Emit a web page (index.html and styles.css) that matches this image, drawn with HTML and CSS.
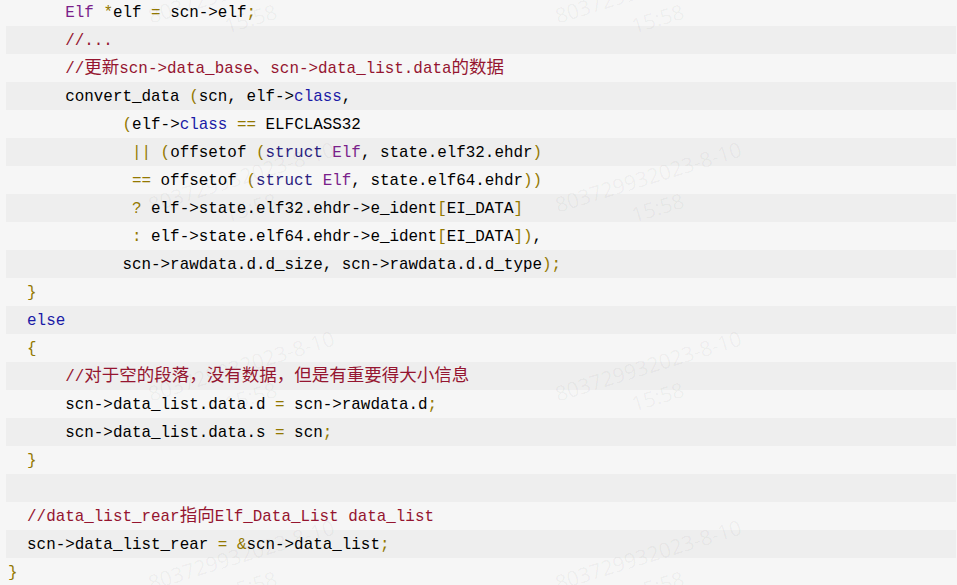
FILE: index.html
```html
<!DOCTYPE html>
<html lang="zh">
<head>
<meta charset="utf-8">
<title>code</title>
<link rel="stylesheet" href="styles.css">
</head>
<body>
<div class="page">
<pre class="code"><div class="l">      <span class="ty">Elf</span> <span class="o">*</span>elf <span class="o">=</span> scn-&gt;elf<span class="o">;</span></div><div class="l">      <span class="c">//...</span></div><div class="l">      <span class="c">//<span class="cjk">更新</span>scn-&gt;data_base<span class="cjk">、</span>scn-&gt;data_list.data<span class="cjk">的数据</span></span></div><div class="l">      convert_data <span class="o">(</span>scn, elf-&gt;<span class="k">class</span>,</div><div class="l">            <span class="o">(</span>elf-&gt;<span class="k">class</span> <span class="o">==</span> ELFCLASS32</div><div class="l">             <span class="o">||</span> <span class="o">(</span>offsetof <span class="o">(</span><span class="s">struct</span> <span class="ty">Elf</span>, state.elf32.ehdr<span class="o">)</span></div><div class="l">             <span class="o">==</span> offsetof <span class="o">(</span><span class="s">struct</span> <span class="ty">Elf</span>, state.elf64.ehdr<span class="o">))</span></div><div class="l">             <span class="o">?</span> elf-&gt;state.elf32.ehdr-&gt;e_ident<span class="o">[</span>EI_DATA<span class="o">]</span></div><div class="l">             <span class="o">:</span> elf-&gt;state.elf64.ehdr-&gt;e_ident<span class="o">[</span>EI_DATA<span class="o">])</span>,</div><div class="l">            scn-&gt;rawdata.d.d_size, scn-&gt;rawdata.d.d_type<span class="o">);</span></div><div class="l">  <span class="o">}</span></div><div class="l">  <span class="k">else</span></div><div class="l">  <span class="o">{</span></div><div class="l">      <span class="c">//<span class="cjk">对于空的段落，没有数据，但是有重要得大小信息</span></span></div><div class="l">      scn-&gt;data_list.data.d <span class="o">=</span> scn-&gt;rawdata.d<span class="o">;</span></div><div class="l">      scn-&gt;data_list.data.s <span class="o">=</span> scn<span class="o">;</span></div><div class="l">  <span class="o">}</span></div><div class="l"> </div><div class="l">  <span class="c">//data_list_rear<span class="cjk">指向</span>Elf_Data_List data_list</span></div><div class="l">  scn-&gt;data_list_rear <span class="o">=</span> <span class="o">&amp;</span>scn-&gt;data_list<span class="o">;</span></div><div class="l"><span class="o">}</span></div></pre>
<div class="wm-layer" aria-hidden="true">
  <div class="wm"><div class="wm-t">803729932023-8-10<br>15:58</div></div>
  <div class="wm"><div class="wm-t">803729932023-8-10<br>15:58</div></div>
  <div class="wm"><div class="wm-t">803729932023-8-10<br>15:58</div></div>
  <div class="wm"><div class="wm-t">803729932023-8-10<br>15:58</div></div>
  <div class="wm"><div class="wm-t">803729932023-8-10<br>15:58</div></div>
  <div class="wm"><div class="wm-t">803729932023-8-10<br>15:58</div></div>
  <div class="wm"><div class="wm-t">803729932023-8-10<br>15:58</div></div>
  <div class="wm"><div class="wm-t">803729932023-8-10<br>15:58</div></div>
</div>
</div>
</body>
</html>
```
FILE: styles.css
```css
html, body {
  margin: 0;
  padding: 0;
  background: #f6f6f6;
  overflow: hidden;
}
.page {
  position: relative;
  width: 957px;
  height: 585px;
  overflow: hidden;
  background: #f6f6f6;
}
.code {
  margin: -2px 0 0 0;
  padding: 0 1px 0 6px;
  font-family: "Liberation Mono", "Noto Sans CJK SC", monospace;
  font-size: 15.9px;
  color: #000;
  white-space: pre;
}
.l {
  display: block;
  box-sizing: border-box;
  height: 28px;
  padding: 3px 0 0 2px;
  line-height: 25px;
}
.l:nth-child(even) {
  background: #eeeeee;
}
.cjk {
  font-family: "Noto Sans CJK SC", sans-serif;
  font-size: 17.5px;
  line-height: 1;
}
.o { color: #937800; }
.c { color: #951530; }
.ty { color: #7a1f8a; }
.k { color: #1a1aa6; }
.s { color: #2a1d80; }

.wm-layer {
  position: absolute;
  left: 42px;
  top: -92px;
  display: grid;
  grid-template-columns: repeat(2, 407px);
  grid-auto-rows: 189px;
  pointer-events: none;
}
.wm {
  display: flex;
  align-items: center;
  justify-content: center;
}
.wm-t {
  transform: rotate(-17deg);
  font-family: "Open Sans", sans-serif;
  font-size: 21px;
  line-height: 32px;
  text-align: center;
  color: rgba(0, 0, 0, 0.045);
  white-space: nowrap;
}
```
